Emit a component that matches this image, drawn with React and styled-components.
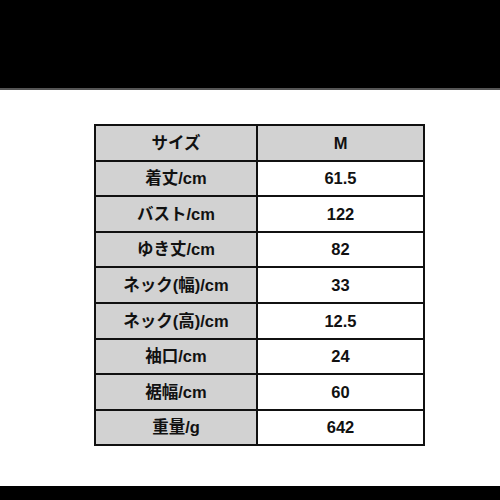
import React from 'react'
import styled, { createGlobalStyle } from 'styled-components'

const rows = [
  ['着丈/cm', '61.5'],
  ['バスト/cm', '122'],
  ['ゆき丈/cm', '82'],
  ['ネック(幅)/cm', '33'],
  ['ネック(高)/cm', '12.5'],
  ['袖口/cm', '24'],
  ['裾幅/cm', '60'],
  ['重量/g', '642'],
]

const GlobalStyle = createGlobalStyle`
  html, body {
    margin: 0;
    padding: 0;
    background: #fff;
  }
  body {
    font-family: "Liberation Sans", "Noto Sans CJK JP", sans-serif;
  }
`

const Page = styled.div`
  width: 500px;
  height: 500px;
  display: flex;
  flex-direction: column;
  overflow: hidden;
`

const TopBar = styled.div`
  height: 88px;
  background: #000;
  border-bottom: 2px solid #555;
  flex: none;
`

const Body = styled.div`
  flex: 1;
  display: flex;
  justify-content: flex-start;
  padding: 34px 0 0 94px;
`

const BottomBar = styled.div`
  height: 14px;
  background: #000;
  flex: none;
`

const Table = styled.div`
  display: grid;
  grid-template-columns: 160px 165px;
  grid-auto-rows: 33.6px;
  gap: 2px;
  padding: 2px;
  background: #111;
  align-self: flex-start;
`

const Cell = styled.div`
  display: flex;
  align-items: center;
  justify-content: center;
  background: ${(p) => (p.$shaded ? '#d2d2d2' : '#fff')};
  color: #111;
  font-weight: 700;
  font-size: 16.5px;
  line-height: 1;
`

const App = () => (
  <Page>
    <GlobalStyle />
    <TopBar />
    <Body>
      <Table>
        <Cell $shaded>サイズ</Cell>
        <Cell $shaded>M</Cell>
        {rows.map(([label, value]) => (
          <React.Fragment key={label}>
            <Cell $shaded>{label}</Cell>
            <Cell>{value}</Cell>
          </React.Fragment>
        ))}
      </Table>
    </Body>
    <BottomBar />
  </Page>
)

export default App
